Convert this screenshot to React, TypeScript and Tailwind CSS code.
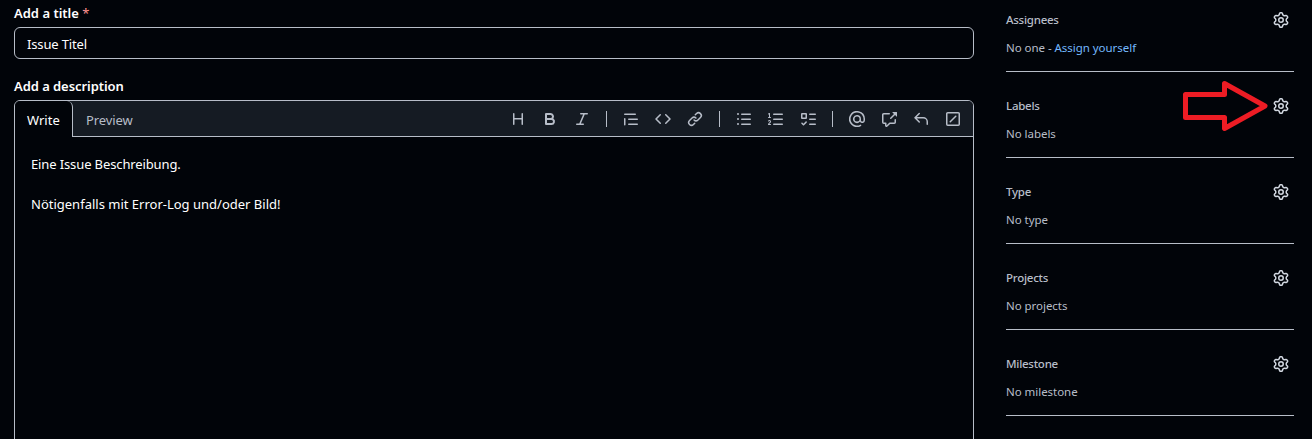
import React from "react";

const icons = {
  heading:
    "M3.75 2a.75.75 0 0 1 .75.75V7h7V2.75a.75.75 0 0 1 1.5 0v10.5a.75.75 0 0 1-1.5 0V8.5h-7v4.75a.75.75 0 0 1-1.5 0V2.75A.75.75 0 0 1 3.75 2Z",
  bold: "M4 2h4.5a3.501 3.501 0 0 1 2.852 5.53A3.499 3.499 0 0 1 9.5 14H4a1 1 0 0 1-1-1V3a1 1 0 0 1 1-1Zm1 7v3h4.5a1.5 1.5 0 0 0 0-3Zm3.5-2a1.5 1.5 0 0 0 0-3H5v3Z",
  italic:
    "M6 2.75A.75.75 0 0 1 6.75 2h6.5a.75.75 0 0 1 0 1.5h-2.505l-3.858 9H9.25a.75.75 0 0 1 0 1.5h-6.5a.75.75 0 0 1 0-1.5h2.505l3.858-9H6.75A.75.75 0 0 1 6 2.75Z",
  quote:
    "M1.75 2.5h10.5a.75.75 0 0 1 0 1.5H1.75a.75.75 0 0 1 0-1.5Zm4 5h8.5a.75.75 0 0 1 0 1.5h-8.5a.75.75 0 0 1 0-1.5Zm0 5h8.5a.75.75 0 0 1 0 1.5h-8.5a.75.75 0 0 1 0-1.5ZM2.5 7.75v6a.75.75 0 0 1-1.5 0v-6a.75.75 0 0 1 1.5 0Z",
  code: "m11.28 3.22 4.25 4.25a.75.75 0 0 1 0 1.06l-4.25 4.25a.749.749 0 0 1-1.275-.326.749.749 0 0 1 .215-.734L13.94 8l-3.72-3.72a.749.749 0 0 1 .326-1.275.749.749 0 0 1 .734.215Zm-6.56 0a.751.751 0 0 1 1.042.018.751.751 0 0 1 .018 1.042L2.06 8l3.72 3.72a.749.749 0 0 1-.326 1.275.749.749 0 0 1-.734-.215L.47 8.53a.75.75 0 0 1 0-1.06Z",
  link: "m7.775 3.275 1.25-1.25a3.5 3.5 0 1 1 4.95 4.95l-2.5 2.5a3.5 3.5 0 0 1-4.95 0 .751.751 0 0 1 .018-1.042.751.751 0 0 1 1.042-.018 1.998 1.998 0 0 0 2.83 0l2.5-2.5a2.002 2.002 0 0 0-2.83-2.83l-1.25 1.25a.751.751 0 0 1-1.042-.018.751.751 0 0 1-.018-1.042Zm-4.69 9.64a1.998 1.998 0 0 0 2.83 0l1.25-1.25a.751.751 0 0 1 1.042.018.751.751 0 0 1 .018 1.042l-1.25 1.25a3.5 3.5 0 1 1-4.95-4.95l2.5-2.5a3.5 3.5 0 0 1 4.95 0 .751.751 0 0 1-.018 1.042.751.751 0 0 1-1.042.018 1.998 1.998 0 0 0-2.83 0l-2.5 2.5a1.998 1.998 0 0 0 0 2.83Z",
  bullets:
    "M5.75 2.5h8.5a.75.75 0 0 1 0 1.5h-8.5a.75.75 0 0 1 0-1.5Zm0 5h8.5a.75.75 0 0 1 0 1.5h-8.5a.75.75 0 0 1 0-1.5Zm0 5h8.5a.75.75 0 0 1 0 1.5h-8.5a.75.75 0 0 1 0-1.5ZM2 14a1 1 0 1 1 0-2 1 1 0 0 1 0 2Zm1-6a1 1 0 1 1-2 0 1 1 0 0 1 2 0ZM2 4a1 1 0 1 1 0-2 1 1 0 0 1 0 2Z",
  numbers:
    "M5 3.25a.75.75 0 0 1 .75-.75h8.5a.75.75 0 0 1 0 1.5h-8.5A.75.75 0 0 1 5 3.25Zm0 5a.75.75 0 0 1 .75-.75h8.5a.75.75 0 0 1 0 1.5h-8.5A.75.75 0 0 1 5 8.25Zm0 5a.75.75 0 0 1 .75-.75h8.5a.75.75 0 0 1 0 1.5h-8.5a.75.75 0 0 1-.75-.75ZM.924 10.32a.5.5 0 0 1-.851-.525l.001-.001.001-.002.002-.004.007-.011c.097-.144.215-.273.348-.384.228-.19.588-.392 1.068-.392.468 0 .858.181 1.126.484.259.294.377.673.377 1.038 0 .987-.686 1.495-1.156 1.845l-.047.035c-.303.225-.522.4-.654.597h1.357a.5.5 0 0 1 0 1H.5a.5.5 0 0 1-.5-.5c0-1.005.692-1.52 1.167-1.875l.035-.025c.531-.396.8-.625.8-1.078a.57.57 0 0 0-.128-.376C1.806 10.068 1.695 10 1.5 10a.658.658 0 0 0-.429.163.835.835 0 0 0-.144.153ZM2.003 2.5V6h.503a.5.5 0 0 1 0 1H.5a.5.5 0 0 1 0-1h.503V3.308l-.28.14a.5.5 0 0 1-.446-.895l1.003-.5a.5.5 0 0 1 .723.447Z",
  tasks:
    "M2 2h4a1 1 0 0 1 1 1v4a1 1 0 0 1-1 1H2a1 1 0 0 1-1-1V3a1 1 0 0 1 1-1Zm4.655 8.595a.75.75 0 0 1 0 1.06L4.03 14.28a.75.75 0 0 1-1.06 0l-1.5-1.5a.749.749 0 0 1 .326-1.275.749.749 0 0 1 .734.215l.97.97 2.095-2.095a.75.75 0 0 1 1.06 0ZM9.75 2.5h5.5a.75.75 0 0 1 0 1.5h-5.5a.75.75 0 0 1 0-1.5Zm0 5h5.5a.75.75 0 0 1 0 1.5h-5.5a.75.75 0 0 1 0-1.5Zm0 5h5.5a.75.75 0 0 1 0 1.5h-5.5a.75.75 0 0 1 0-1.5Zm-7.25-9v3h3v-3Z",
  mention:
    "M4.75 2.37a6.501 6.501 0 0 0 6.5 11.26.75.75 0 0 1 .75 1.298A7.999 7.999 0 0 1 .989 4.148 8 8 0 0 1 16 7.75v1.5a2.75 2.75 0 0 1-5.072 1.475 3.999 3.999 0 0 1-6.65-4.19A4 4 0 0 1 12 8v1.25a1.25 1.25 0 0 0 2.5 0V7.867a6.5 6.5 0 0 0-9.75-5.496ZM10.5 8a2.5 2.5 0 1 0-5 0 2.5 2.5 0 0 0 5 0Z",
  reference:
    "M2.75 3.5a.25.25 0 0 0-.25.25v7.5c0 .138.112.25.25.25h2a.75.75 0 0 1 .75.75v2.19l2.72-2.72a.749.749 0 0 1 .53-.22h4.5a.25.25 0 0 0 .25-.25v-2.5a.75.75 0 0 1 1.5 0v2.5A1.75 1.75 0 0 1 13.25 13H9.06l-2.573 2.573A1.458 1.458 0 0 1 4 14.543V13H2.75A1.75 1.75 0 0 1 1 11.25v-7.5C1 2.784 1.784 2 2.75 2h5.5a.75.75 0 0 1 0 1.5ZM16 1.25v4.146a.25.25 0 0 1-.427.177L14.03 4.03l-3.75 3.75a.749.749 0 0 1-1.275-.326.749.749 0 0 1 .215-.734l3.75-3.75-1.543-1.543A.25.25 0 0 1 11.604 1h4.146a.25.25 0 0 1 .25.25Z",
  reply:
    "M6.78 1.97a.75.75 0 0 1 0 1.06L3.81 6h6.44A4.75 4.75 0 0 1 15 10.75v2.5a.75.75 0 0 1-1.5 0v-2.5a3.25 3.25 0 0 0-3.25-3.25H3.81l2.97 2.97a.749.749 0 0 1-.326 1.275.749.749 0 0 1-.734-.215L1.47 7.28a.75.75 0 0 1 0-1.06l4.25-4.25a.75.75 0 0 1 1.06 0Z",
  slash:
    "M13.25 1c.966 0 1.75.784 1.75 1.75v10.5A1.75 1.75 0 0 1 13.25 15H2.75A1.75 1.75 0 0 1 1 13.25V2.75C1 1.784 1.784 1 2.75 1ZM2.75 2.5a.25.25 0 0 0-.25.25v10.5c0 .138.112.25.25.25h10.5a.25.25 0 0 0 .25-.25V2.75a.25.25 0 0 0-.25-.25Zm8.53 3.28-5.5 5.5a.749.749 0 0 1-1.275-.326.749.749 0 0 1 .215-.734l5.5-5.5a.749.749 0 0 1 1.275.326.749.749 0 0 1-.215.734Z",
  gear: "M8 0a8.2 8.2 0 0 1 .701.031C9.444.095 9.99.645 10.16 1.29l.288 1.107c.018.066.079.158.212.224.231.114.454.243.668.386.123.082.233.09.299.071l1.103-.303c.644-.176 1.392.021 1.82.63.27.385.506.792.704 1.218.315.675.111 1.422-.364 1.891l-.814.806c-.049.048-.098.147-.088.294.016.257.016.515 0 .772-.01.147.038.246.088.294l.814.806c.475.469.679 1.216.364 1.891a7.977 7.977 0 0 1-.704 1.217c-.428.61-1.176.807-1.82.63l-1.102-.302c-.067-.019-.177-.011-.3.071a5.909 5.909 0 0 1-.668.386c-.133.066-.194.158-.211.224l-.29 1.106c-.168.646-.715 1.196-1.458 1.26a8.006 8.006 0 0 1-1.402 0c-.743-.064-1.289-.614-1.458-1.26l-.289-1.106c-.018-.066-.079-.158-.212-.224a5.738 5.738 0 0 1-.668-.386c-.123-.082-.233-.09-.299-.071l-1.103.303c-.644.176-1.392-.021-1.82-.63a8.12 8.12 0 0 1-.704-1.218c-.315-.675-.111-1.422.363-1.891l.815-.806c.05-.048.098-.147.088-.294a6.214 6.214 0 0 1 0-.772c.01-.147-.038-.246-.088-.294l-.815-.806C.635 6.045.431 5.298.746 4.623a7.92 7.92 0 0 1 .704-1.217c.428-.61 1.176-.807 1.82-.63l1.102.302c.067.019.177.011.3-.071.214-.143.437-.272.668-.386.133-.066.194-.158.211-.224l.29-1.106C6.009.645 6.556.095 7.299.03 7.53.01 7.764 0 8 0Zm-.571 1.525c-.036.003-.108.036-.137.146l-.289 1.105c-.147.561-.549.967-.998 1.189-.173.086-.34.183-.5.29-.417.278-.97.423-1.529.27l-1.103-.303c-.109-.03-.175.016-.195.045-.22.312-.412.644-.573.99-.014.031-.021.11.059.19l.815.806c.411.406.562.957.53 1.456a4.709 4.709 0 0 0 0 .582c.032.499-.119 1.05-.53 1.456l-.815.806c-.081.08-.073.159-.059.19.162.346.353.677.573.989.02.03.085.076.195.046l1.102-.303c.56-.153 1.113-.008 1.53.27.161.107.328.204.501.29.447.222.85.629.997 1.189l.289 1.105c.029.109.101.143.137.146a6.6 6.6 0 0 0 1.142 0c.036-.003.108-.036.137-.146l.289-1.105c.147-.561.549-.967.998-1.189.173-.086.34-.183.5-.29.417-.278.97-.423 1.529-.27l1.103.303c.109.029.175-.016.195-.045.22-.313.411-.644.573-.99.014-.031.021-.11-.059-.19l-.815-.806c-.411-.406-.562-.957-.53-1.456a4.709 4.709 0 0 0 0-.582c-.032-.499.119-1.05.53-1.456l.815-.806c.081-.08.073-.159.059-.19a6.464 6.464 0 0 0-.573-.989c-.02-.03-.085-.076-.195-.046l-1.102.303c-.56.153-1.113.008-1.53-.27a4.44 4.44 0 0 0-.501-.29c-.447-.222-.85-.629-.997-1.189l-.289-1.105c-.029-.11-.101-.143-.137-.146a6.6 6.6 0 0 0-1.142 0ZM11 8a3 3 0 1 1-6 0 3 3 0 0 1 6 0ZM9.5 8a1.5 1.5 0 1 0-3.001.001A1.5 1.5 0 0 0 9.5 8Z",
};

type IconName = keyof typeof icons;

function Icon({ name }: { name: IconName }) {
  return (
    <svg viewBox="0 0 16 16" className="size-4 shrink-0 fill-current" aria-hidden="true">
      <path d={icons[name]} />
    </svg>
  );
}

const toolbar: IconName[][] = [
  ["heading", "bold", "italic"],
  ["quote", "code", "link"],
  ["bullets", "numbers", "tasks"],
  ["mention", "reference", "reply", "slash"],
];

function Toolbar() {
  return (
    <div className="ml-auto flex h-full items-center pr-1">
      {toolbar.map((group, i) => (
        <React.Fragment key={i}>
          {i > 0 && <div className="mx-2 h-4 w-px bg-[#b7bdc8]" />}
          {group.map((name) => (
            <button key={name} className="flex h-8 w-8 items-center justify-center">
              <Icon name={name} />
            </button>
          ))}
        </React.Fragment>
      ))}
    </div>
  );
}

const sections: { title: string; body: React.ReactNode }[] = [
  {
    title: "Assignees",
    body: (
      <>
        No one - <a className="text-[#74b9ff]">Assign yourself</a>
      </>
    ),
  },
  { title: "Labels", body: "No labels" },
  { title: "Type", body: "No type" },
  { title: "Projects", body: "No projects" },
  { title: "Milestone", body: "No milestone" },
];

function Sidebar() {
  return (
    <aside className="w-72 text-[11.5px] text-[#b7bdc8]">
      {sections.map(({ title, body }, i) => (
        <section
          key={title}
          className={
            i === 0
              ? "flex h-[72px] flex-col border-b border-[#b7bdc8] pt-1"
              : "flex h-[86px] flex-col border-b border-[#b7bdc8] pt-[18px]"
          }
        >
          <div className="flex h-8 items-center justify-between pr-[5px]">
            <h3 className="font-medium tracking-[-0.25px]">{title}</h3>
            <span className="relative flex text-[#d1d7e0]">
              <Icon name="gear" />
              {title === "Labels" && (
                <svg
                  viewBox="0 0 88 54"
                  className="absolute top-[-19px] left-[-92px] h-[54px] w-[88px]"
                  fill="none"
                  stroke="#ed1c24"
                  strokeWidth="5"
                  strokeLinejoin="round"
                >
                  <path d="M4.5 15.5H43.5V4.5L84 27L43.5 49.5V38.5H4.5Z" />
                </svg>
              )}
            </span>
          </div>
          <p className="mt-[3px] leading-[18px] tracking-[-0.04px]">{body}</p>
        </section>
      ))}
    </aside>
  );
}

export default function App() {
  return (
    <div className="flex h-[439px] gap-8 overflow-hidden bg-[#010409] pl-3.5 font-['Noto_Sans','Open_Sans',sans-serif] text-sm leading-5 text-white">
      <main className="flex w-[960px] flex-col">
        <label className="mt-[3px] text-[13px] leading-5 font-semibold">
          Add a title <span className="font-normal text-[#ff9492]">*</span>
        </label>
        <div className="mt-1 flex h-8 shrink-0 items-center rounded-md border border-[#b7bdc8] px-3 pt-0.5 text-[13px] tracking-[-0.15px]">
          Issue Titel
        </div>
        <label className="mt-[17px] text-[13px] leading-5 font-semibold tracking-[-0.06px]">
          Add a description
        </label>
        <div className="mt-1 h-[360px] shrink-0 rounded-md border border-[#b7bdc8]">
          <div className="flex h-9 rounded-t-[5px] bg-[#151b23] text-[#b7bdc8]">
            <div className="flex h-full w-[58px] items-center rounded-t-md border-r border-[#b7bdc8] bg-[#010409] pt-0.5 pl-3 text-[13px] text-white">
              Write
            </div>
            <div className="flex flex-1 border-b border-[#b7bdc8]">
              <div className="flex items-center pt-0.5 pl-[13px] text-[13px] tracking-[-0.1px]">Preview</div>
              <Toolbar />
            </div>
          </div>
          <div className="px-4 pt-[17px] text-[13px]">
            <p className="tracking-[-0.12px]">Eine Issue Beschreibung.</p>
            <p className="mt-5">Nötigenfalls mit Error-Log und/oder Bild!</p>
          </div>
        </div>
      </main>
      <Sidebar />
    </div>
  );
}
